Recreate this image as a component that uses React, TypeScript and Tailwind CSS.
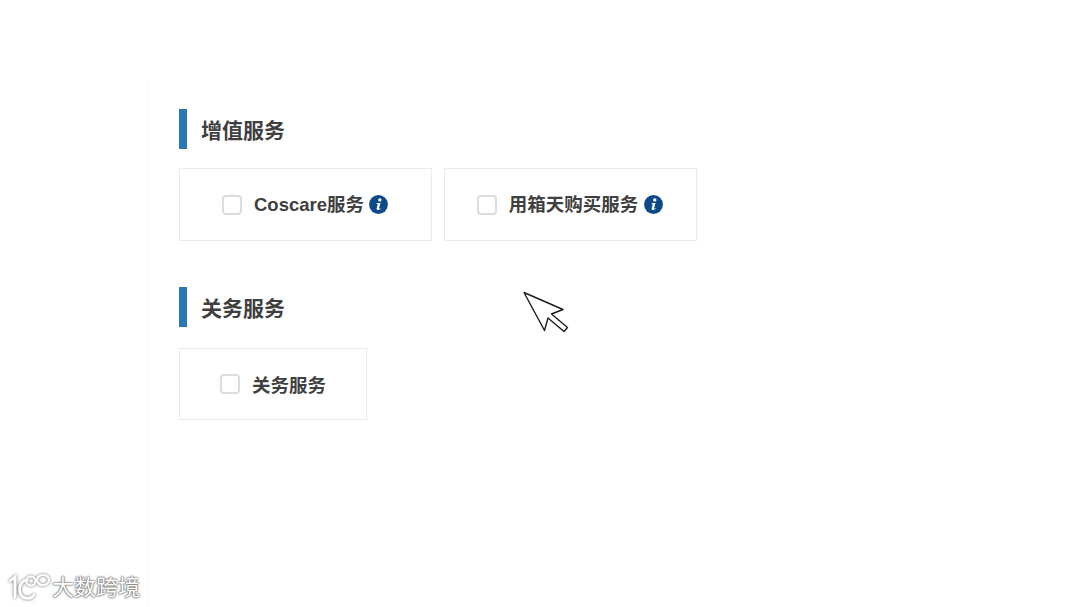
const font = "[font-family:'Liberation_Sans','Noto_Sans_CJK_SC',sans-serif]";

function Heading({ children }: { children: React.ReactNode }) {
  return (
    <div className="flex h-10 items-center border-l-[8px] border-[#2b78b6] pl-[14px]">
      <h2 className="pt-[3px] text-[21px] leading-none font-bold text-[#3f3f3f]">{children}</h2>
    </div>
  );
}

function Info() {
  return (
    <svg width="19" height="19" viewBox="0 0 19 19" className="shrink-0">
      <circle cx="9.5" cy="9.5" r="9.4" fill="#0c4a8a" />
      <circle cx="10.8" cy="4.9" r="1.7" fill="#fff" />
      <path d="M7.400 8h4.100l-1.500 5.300c-.1.4.3.5 1.500-.1l.1.7c-1.500 1.100-4.400 1.600-4-.300L8.800 9c.1-.4-.6-.4-1.500-.3z" fill="#fff" />
    </svg>
  );
}

function Card({ label, info, className, gap, textPad, infoGap, innerPad }: { label: string; info?: boolean; className: string; gap: string; textPad: string; infoGap?: string; innerPad?: string }) {
  return (
    <label className={`flex items-center justify-center border border-[#ebebeb] bg-white ${className} ${innerPad ?? ""}`}>
      <span className={`h-5 w-5 shrink-0 rounded-[4px] border-2 border-[#dcdcdc] bg-white ${gap}`} />
      <span className={`text-[18.5px] leading-none font-bold text-[#404040] ${textPad}`}>{label}</span>
      {info && <span className={`flex ${infoGap}`}><Info /></span>}
    </label>
  );
}

export default function App() {
  return (
    <div className={`relative h-[607px] w-[1080px] overflow-hidden bg-white ${font}`}>
      <div className="pt-[84px] pl-[147px]">
        <div className="h-[523px] border-l border-[#f6f6fb] pt-[25px] pl-[31px]">
          <Heading>增值服务</Heading>
          <div className="mt-[19px] flex gap-[12px]">
            <Card label="Coscare服务" info className="h-[73px] w-[253px]" gap="mr-[12px]" textPad="pt-[2px]" infoGap="ml-[5px]" innerPad="pr-[1px]" />
            <Card label="用箱天购买服务" info className="h-[73px] w-[253px]" gap="mr-[12px]" textPad="pt-[2px]" infoGap="ml-[6px]" innerPad="pr-[1px]" />
          </div>
          <div className="mt-[46px]">
            <Heading>关务服务</Heading>
          </div>
          <div className="mt-[21px] flex">
            <Card label="关务服务" className="h-[72px] w-[188px]" gap="mr-[12px]" textPad="pt-[4px]" />
          </div>
        </div>
      </div>

      <svg width="48" height="44" viewBox="0 0 48 44" className="absolute top-[290px] left-[522px]">
        <path
          d="M2 2.500 L41 19.500 L29.500 24 L45.500 37.500 L42 41.500 L26 28 L22.500 40.500 Z"
          fill="#fff"
          stroke="#1c1c1c"
          strokeWidth="1.400"
          strokeLinejoin="round"
        />
      </svg>

      <div className="absolute top-[572px] left-[8px] flex items-center">
        <svg width="44" height="30" viewBox="0 0 44 30" className="[filter:drop-shadow(0_0_1.500px_#666)]">
          <g fill="none" stroke="#fff" strokeWidth="2.800" strokeLinecap="round">
            <path d="M2 9 L7 5 L7 25" />
            <path d="M19 8 C10 9 9 23 17 26 C21 27 24 26 26 23" />
            <ellipse cx="23" cy="9" rx="4.500" ry="4.500" strokeWidth="2.200" />
            <ellipse cx="35" cy="8" rx="6" ry="5" strokeWidth="2.200" />
          </g>
        </svg>
        <span className="pt-[2px] text-[22px] leading-none text-white [text-shadow:0_0_2px_#666,0_0_2px_#666,0_0_1px_#777]">大数跨境</span>
      </div>
    </div>
  );
}
